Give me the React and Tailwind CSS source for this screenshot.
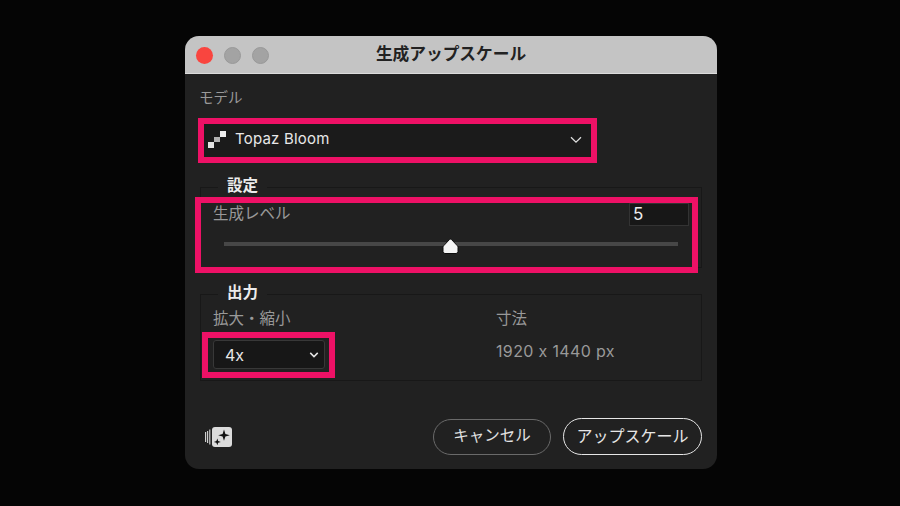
const font = { fontFamily: '"Inter","Noto Sans CJK JP",sans-serif' };

function Chevron({ className, width = 1.3 }) {
  return (
    <svg className={className} viewBox="0 0 12 8" fill="none" stroke="currentColor" strokeWidth={width}>
      <path d="M1 1.2 L6 6.2 L11 1.2" />
    </svg>
  );
}

function PixelLogo() {
  return (
    <svg width="18" height="17" viewBox="0 0 18 17" className="shrink-0">
      <rect x="0" y="11" width="6" height="6" fill="#e4e4e4" />
      <rect x="6" y="6" width="6" height="5" fill="#b4b4b4" />
      <rect x="12" y="0" width="6" height="6" fill="#efefef" />
    </svg>
  );
}

function SparkleIcon() {
  return (
    <svg width="27" height="20" viewBox="0 0 27 20">
      <path d="M0.6 5 V15" stroke="#d8d8d8" strokeWidth="1.1" />
      <path d="M2.6 4 V16" stroke="#d8d8d8" strokeWidth="1.1" />
      <path d="M4.8 2.5 V17.5" stroke="#d8d8d8" strokeWidth="1.1" />
      <rect x="7" y="0" width="20" height="20" rx="3" fill="#dcdcdc" />
      <path d="M19 2.5 L20.4 7 L24.8 8.2 L20.4 9.4 L19 13.8 L17.6 9.4 L13.2 8.2 L17.6 7 Z" fill="#111111" />
      <path d="M12.3 11.5 L13.2 14 L15.8 14.9 L13.2 15.8 L12.3 18.3 L11.4 15.8 L8.8 14.9 L11.4 14 Z" fill="#111111" />
    </svg>
  );
}

function Legend({ children }) {
  return (
    <div className="absolute left-[17px] top-[-12px] bg-[#212121] px-[9px] text-[15.5px] leading-[20px] font-bold text-[#ececec]">
      {children}
    </div>
  );
}

export default function App() {
  return (
    <div className="w-[900px] h-[506px] bg-[#050505] pt-[36px] pl-[185px] overflow-hidden" style={font}>
      <div className="w-[532px] h-[433px] rounded-[14px] overflow-hidden bg-[#212121] flex flex-col">
        <div className="relative h-[38px] shrink-0 bg-[#c4c4c4] border-b border-[#dcdcdc] flex items-center justify-center">
          <div className="absolute left-[11px] top-[11px] flex gap-[11px]">
            <span className="w-[17px] h-[17px] rounded-full bg-[#f9453f]" />
            <span className="w-[17px] h-[17px] rounded-full bg-[#a3a3a3] border border-[#999999]" />
            <span className="w-[17px] h-[17px] rounded-full bg-[#a3a3a3] border border-[#999999]" />
          </div>
          <span className="text-[16.7px] font-bold text-[#222222] leading-none">生成アップスケール</span>
        </div>

        <div className="flex-1 flex flex-col pl-[15px] pr-[15px] relative">
          <div className="mt-[14px] ml-[-1px] text-[14.5px] leading-[20px] text-[#999999]">モデル</div>

          <div className="mt-[10px] ml-[-2px] w-[399px] h-[45px] border-[6px] border-[#ee1166] bg-[#1b1b1b] flex items-center pl-[4px] pr-[9px] pb-[2px]">
            <PixelLogo />
            <span className="ml-[9px] text-[15px] text-[#e8e8e8] flex-1 tracking-[0.2px]">Topaz Bloom</span>
            <Chevron className="w-[12px] h-[8px] text-[#dddddd]" />
          </div>

          <div className="relative mt-[24px] h-[81px] border border-[#181818]">
            <Legend>設定</Legend>
            <div className="absolute left-[-6px] top-[9px] w-[503px] h-[76px] border-[6px] border-[#ee1166]" />
            <div className="relative flex justify-between pl-[12px] pr-[12px] pt-[16px] h-[38px]">
              <span className="text-[15.5px] leading-[20px] text-[#999999]">生成レベル</span>
              <span className="w-[60px] h-[23px] mt-[-1px] bg-[#171717] border border-[#333333] pl-[3px] text-[17px] leading-[21px] text-[#ececec]">5</span>
            </div>
            <div className="relative mt-[16px] mx-[23px] h-[4px] bg-[#474747]">
              <svg className="absolute left-[218px] top-[-4px]" width="17" height="17" viewBox="0 0 17 17">
                <path d="M7.4 1.6 Q8.5 0.6 9.6 1.6 L15.2 7.6 Q16 8.4 16 9.6 V13.5 Q16 15.5 14 15.5 H3 Q1 15.5 1 13.5 V9.6 Q1 8.4 1.8 7.6 Z" fill="#f4f4f4" stroke="#0c0c0c" strokeWidth="1" />
              </svg>
            </div>
          </div>

          <div className="relative mt-[26px] h-[87px] border border-[#181818] flex">
            <Legend>出力</Legend>
            <div className="w-[295px] pl-[12px] pt-[14px]">
              <div className="text-[15.5px] leading-[20px] text-[#999999]">拡大・縮小</div>
              <div className="mt-[11px] relative w-[112px] h-[29px] rounded-[3px] bg-[#171717] border border-[#383838] flex items-center justify-between pl-[11px] pr-[5px]">
                <span className="text-[16px] text-[#e8e8e8]">4x</span>
                <Chevron className="w-[10px] h-[6px] text-[#e4e4e4]" width={2} />
                <div className="absolute left-[-12px] top-[-9px] w-[133px] h-[46px] border-[6px] border-[#ee1166]" />
              </div>
            </div>
            <div className="pt-[14px] text-[#999999]">
              <div className="text-[15.5px] leading-[20px]">寸法</div>
              <div className="mt-[11px] text-[16px] leading-[22px] tracking-[0.35px]">1920 x 1440 px</div>
            </div>
          </div>

          <div className="mt-[37px] flex items-center">
            <div className="ml-[5px] flex"><SparkleIcon /></div>
            <button className="ml-auto w-[118px] h-[36px] pb-[2px] rounded-full border border-[#6a6a6a] text-[15.5px] text-[#e2e2e2] flex items-center justify-center">キャンセル</button>
            <button className="ml-[12px] w-[139px] h-[37px] pb-[2px] rounded-full border-[1.5px] border-[#e6e6e6] text-[16px] text-[#e6e6e6] flex items-center justify-center">アップスケール</button>
          </div>
        </div>
      </div>
    </div>
  );
}
